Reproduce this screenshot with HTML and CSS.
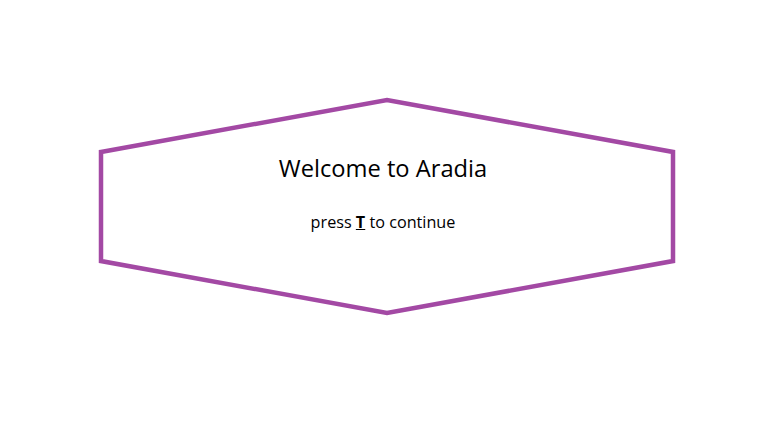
FILE: index.html
```html
<!DOCTYPE html>
<html>
<head>
<meta charset="utf-8">
<link rel="stylesheet" href="styles.css">
</head>
<body>
<div class="stage">
  <div class="hex">
    <svg class="hex-shape" width="580" height="222" viewBox="0 0 580 222">
      <polygon points="4,55 290,3 576,55 576,164 290,216 4,164" fill="none" stroke="#a349a4" stroke-width="4.5" stroke-linejoin="miter"/>
    </svg>
    <div class="hex-text">
      <h1 class="title">Welcome to Aradia</h1>
      <p class="sub">press <span class="key">T</span> to continue</p>
    </div>
  </div>
</div>
</body>
</html>
```
FILE: styles.css
```css
html, body {
  margin: 0;
  padding: 0;
  background: #fff;
}
.stage {
  width: 780px;
  height: 434px;
  padding: 97px 0 0 97px;
  box-sizing: border-box;
}
.hex {
  position: relative;
  width: 580px;
  height: 222px;
}
.hex-shape {
  position: absolute;
  left: 0;
  top: 0;
}
.hex-text {
  position: relative;
  padding: 53px 8px 0 0;
  text-align: center;
  font-family: "Open Sans", "Noto Sans", sans-serif;
  color: #000;
}
.title {
  margin: 0;
  font-size: 23.7px;
  font-weight: 400;
  line-height: 36px;
}
.sub {
  margin: 25px 0 0;
  font-size: 16.2px;
  line-height: 22px;
}
.key {
  font-weight: 700;
  text-decoration: underline;
}
```
